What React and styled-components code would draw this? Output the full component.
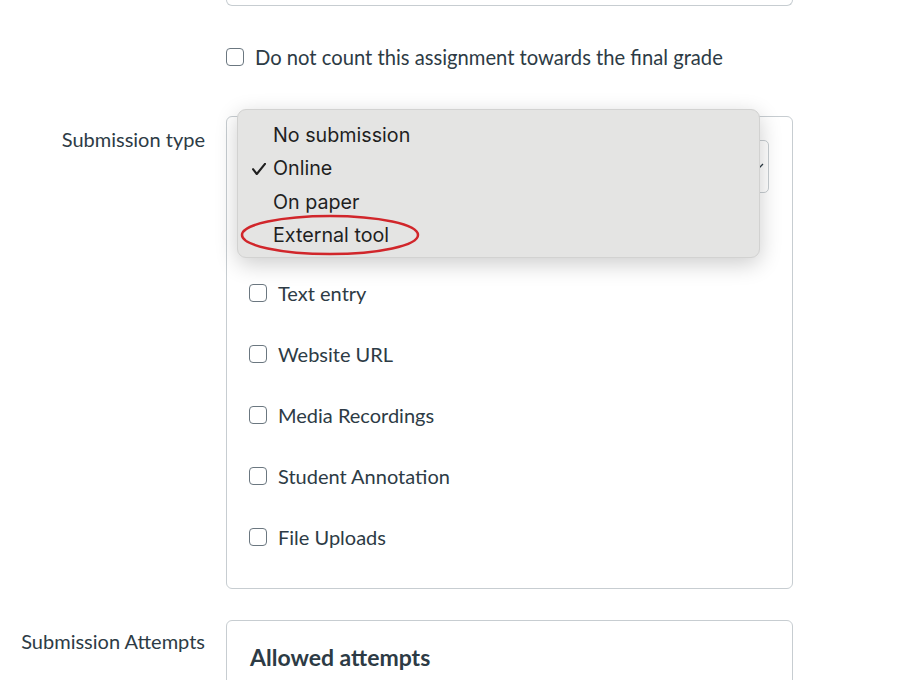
import React from "react";
import styled, { createGlobalStyle } from "styled-components";

const Global = createGlobalStyle`
  html, body { margin: 0; padding: 0; background: #fff; }
  body { font-family: Lato, "Noto Sans", sans-serif; color: #2d3b45; }
`;

const Page = styled.div`
  width: 904px;
  height: 680px;
  overflow: hidden;
  display: grid;
  grid-template-columns: 205px 567px;
  column-gap: 21px;
  align-content: start;
`;

const Tail = styled.div`
  grid-column: 2;
  height: 5px;
  border: 1px solid #c7cdd1;
  border-top: none;
  border-radius: 0 0 6px 6px;
`;

const CheckRow = styled.label`
  display: flex;
  align-items: center;
  gap: 11px;
  height: 61px;
  font-size: 20px;
  color: #2d3b45;
`;

const TopCheck = styled(CheckRow)`
  grid-column: 2;
  margin-top: 39px;
  height: 24px;
  gap: 11px;
  font-size: 20.2px;
`;

const Box = styled.span`
  width: 16px;
  height: 16px;
  border: 1px solid #6b7780;
  border-radius: 4px;
  flex: none;
  background: #fff;
`;

const Label = styled.div`
  grid-column: 1;
  text-align: right;
  font-size: 20px;
  line-height: 24px;
  color: #2d3b45;
  padding-top: ${(p) => p.$top}px;
`;

const Panel = styled.div`
  grid-column: 2;
  position: relative;
  border: 1px solid #c7cdd1;
  border-radius: 6px;
  margin-top: ${(p) => p.$mt}px;
  padding: ${(p) => p.$pad};
  box-sizing: border-box;
  height: ${(p) => p.$h || "auto"};
`;

const Select = styled.div`
  height: 53px;
  box-sizing: border-box;
  border: 1px solid #c7cdd1;
  border-radius: 5px;
  position: relative;
  margin-bottom: 69px;
`;

const Chevron = styled.svg`
  position: absolute;
  right: 4px;
  top: 20px;
`;

const Menu = styled.div`
  position: absolute;
  left: 10px;
  top: -8px;
  width: 523px;
  height: 149px;
  box-sizing: border-box;
  background: #e4e4e3;
  border: 1px solid #d2d2d1;
  border-radius: 9px;
  box-shadow: 0 6px 22px rgba(0, 0, 0, 0.2);
  padding: 8px 0 7px;
  font-family: Inter, "Open Sans", sans-serif;
  z-index: 2;
`;

const Option = styled.div`
  height: 33.5px;
  display: flex;
  align-items: center;
  font-size: 19.7px;
  color: #1f1f1f;
  position: relative;
  padding-left: 35px;
`;

const Tick = styled.svg`
  position: absolute;
  left: 14px;
  top: 11px;
`;

const Ellipse = styled.svg`
  position: absolute;
  left: 3px;
  top: 105px;
  overflow: visible;
`;

const Heading = styled.div`
  font-size: 23px;
  line-height: 28px;
  font-weight: 700;
  color: #2d3b45;
`;

const types = ["Text entry", "Website URL", "Media Recordings", "Student Annotation", "File Uploads"];

export default function App() {
  return (
    <>
      <Global />
      <Page>
        <Tail />
        <TopCheck>
          <Box />
          Do not count this assignment towards the final grade
        </TopCheck>

        <Label $top={58}>Submission type</Label>
        <Panel $mt={47} $pad="23px 23px 21px 22px">
          <Select>
            <Chevron width="10" height="10" viewBox="0 0 10 10">
              <path d="M1 3 L5 7 L9 3" fill="none" stroke="#2d3b45" strokeWidth="1.3" />
            </Chevron>
          </Select>
          {types.map((t) => (
            <CheckRow key={t}>
              <Box />
              {t}
            </CheckRow>
          ))}
          <Menu>
            <Option>No submission</Option>
            <Option>
              <Tick width="14" height="12" viewBox="0 0 14 12">
                <path d="M1 6.2 L4.8 11 L13 0.8" fill="none" stroke="#1f1f1f" strokeWidth="2.1" strokeLinecap="round" strokeLinejoin="round" />
              </Tick>
              Online
            </Option>
            <Option>On paper</Option>
            <Option>External tool</Option>
            <Ellipse width="178" height="40" viewBox="0 0 178 40">
              <ellipse cx="89" cy="20" rx="88" ry="19" fill="none" stroke="#d1262b" strokeWidth="2.5" />
            </Ellipse>
          </Menu>
        </Panel>

        <Label $top={40}>Submission Attempts</Label>
        <Panel $mt={31} $pad="22px 23px" $h="120px">
          <Heading>Allowed attempts</Heading>
        </Panel>
      </Page>
    </>
  );
}
